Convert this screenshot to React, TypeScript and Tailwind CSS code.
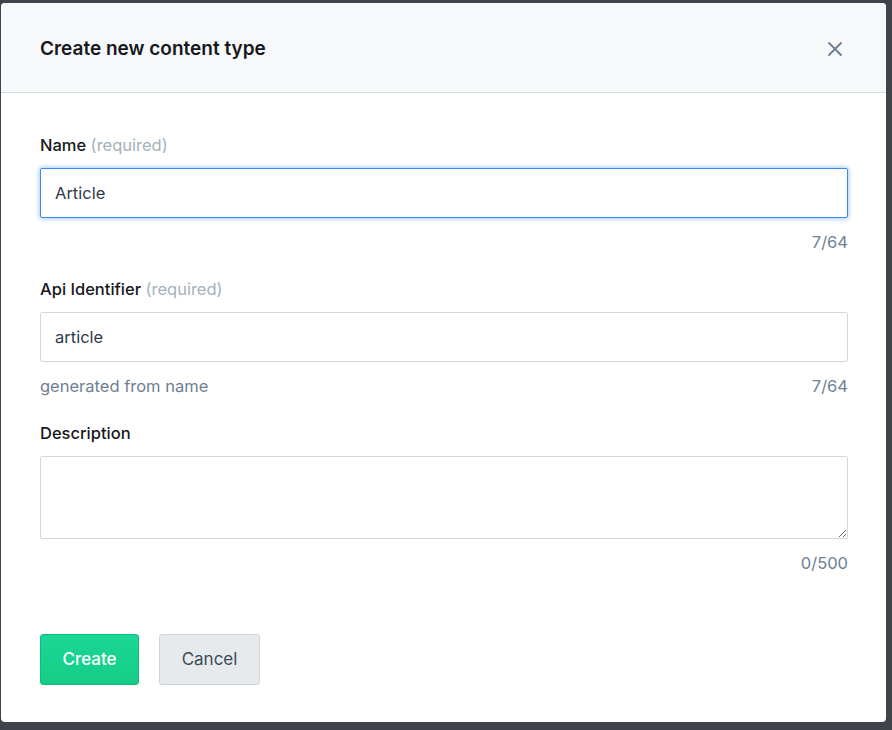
import React from "react";

export default function App() {
  const font = { fontFamily: "Inter, 'Noto Sans', sans-serif" };
  return (
    <div className="w-[892px] h-[730px] bg-[#3f444a] pt-[3px] pl-[1px]" style={font}>
      <div className="w-[885px] h-[719px] bg-white rounded-[4px] overflow-hidden flex flex-col">
        <div className="h-[90px] shrink-0 bg-[#f6f8f9] border-b border-[#d3dade] flex items-center justify-between pl-[39px] pr-[43px]">
          <h1 className="mt-[4px] text-[19px] font-semibold text-[#16181d]">Create new content type</h1>
          <svg width="16" height="16" viewBox="0 0 16 16" className="mt-[2px] text-[#6d7d8e]">
            <path d="M2 2 L14 14 M14 2 L2 14" stroke="currentColor" strokeWidth="1.8" strokeLinecap="round" />
          </svg>
        </div>
        <div className="pl-[39px] pr-[38px] pt-[42px] flex flex-col">
          <label className="text-[16.5px] font-medium text-[#16181d] leading-[20px]">
            Name <span className="font-normal text-[#a3b2bb]">(required)</span>
          </label>
          <input
            readOnly
            value="Article"
            className="mt-[13px] h-[50px] w-full border border-[#3d8ae6] rounded-[2px] px-[14px] text-[16.5px] text-[#2e3a4a] outline-none shadow-[0_0_4px_1px_rgba(61,138,230,0.45)]"
          />
          <div className="mt-[14px] text-right text-[16.5px] text-[#6c7f93] leading-[20px]">7/64</div>

          <label className="mt-[27px] text-[16.5px] font-medium text-[#16181d] leading-[20px]">
            Api Identifier <span className="font-normal text-[#a3b2bb]">(required)</span>
          </label>
          <input
            readOnly
            value="article"
            className="mt-[13px] h-[50px] w-full border border-[#cfd9df] rounded-[2px] px-[14px] text-[16.5px] text-[#2e3a4a] outline-none"
          />
          <div className="mt-[14px] flex justify-between text-[16.5px] text-[#6c7f93] leading-[20px]">
            <span>generated from name</span>
            <span>7/64</span>
          </div>

          <label className="mt-[27px] text-[16.5px] font-medium text-[#16181d] leading-[20px]">Description</label>
          <textarea
            readOnly
            className="mt-[13px] h-[83px] w-full border border-[#cfd9df] rounded-[2px] px-[14px] py-[10px] text-[16.5px] outline-none resize-y"
          />
          <div className="mt-[14px] text-right text-[16.5px] text-[#6c7f93] leading-[20px]">0/500</div>

          <div className="mt-[61px] flex gap-[20px]">
            <button className="w-[99px] h-[51px] rounded-[3px] border border-[#14b97c] bg-gradient-to-b from-[#1ad896] to-[#15cc87] text-white text-[17px] font-medium">
              Create
            </button>
            <button className="w-[101px] h-[51px] rounded-[3px] border border-[#cdd5db] bg-[#e6eaed] text-[#3d4b5b] text-[17px]">
              Cancel
            </button>
          </div>
        </div>
      </div>
    </div>
  );
}
